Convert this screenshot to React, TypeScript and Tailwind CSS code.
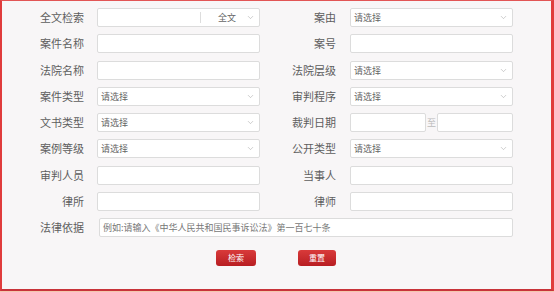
import { ChevronDown } from 'lucide-react'

const font = { fontFamily: '"Noto Sans CJK SC", "Noto Sans", sans-serif' }

function Label({ text, w }: { text: string; w: string }) {
  return <div className={`${w} shrink-0 text-right text-[11px] leading-[19px] text-[#5e5e5e]`}>{text}</div>
}

function TextBox({ className = '' }: { className?: string }) {
  return <div className={`h-[19px] rounded-[2px] border border-[#dcdcdc] bg-white ${className}`} />
}

function SelectBox({ className = '' }: { className?: string }) {
  return (
    <div className={`flex h-[19px] items-center justify-between rounded-[2px] border border-[#dcdcdc] bg-white pl-[3px] pr-[4px] ${className}`}>
      <span className="text-[9px] leading-none text-[#666]">请选择</span>
      <ChevronDown className="h-[9px] w-[9px] text-[#aaa]" strokeWidth={1.5} />
    </div>
  )
}

function Cell({ kind }: { kind: 'text' | 'select' }) {
  return kind === 'text' ? <TextBox className="w-[163px]" /> : <SelectBox className="w-[163px]" />
}

const rows: { l: string; lk: 'text' | 'select' | 'full'; r: string; rk: 'text' | 'select' | 'date' }[] = [
  { l: '全文检索', lk: 'full', r: '案由', rk: 'select' },
  { l: '案件名称', lk: 'text', r: '案号', rk: 'text' },
  { l: '法院名称', lk: 'text', r: '法院层级', rk: 'select' },
  { l: '案件类型', lk: 'select', r: '审判程序', rk: 'select' },
  { l: '文书类型', lk: 'select', r: '裁判日期', rk: 'date' },
  { l: '案例等级', lk: 'select', r: '公开类型', rk: 'select' },
  { l: '审判人员', lk: 'text', r: '当事人', rk: 'text' },
  { l: '律所', lk: 'text', r: '律师', rk: 'text' },
]

export default function App() {
  return (
    <div className="h-[292px] w-[554px] bg-[#f3c7ae]" style={font}>
      <div className="h-[291px] border-t border-b-2 border-l-2 border-r-[3px] border-t-[#e25555] border-b-[#c8333a] border-l-[#e03c3c] border-r-[#e03c3c] bg-[#f8f6f7]">
        <div className="flex flex-col gap-[7.3px] pt-[7px]">
          {rows.map((row) => (
            <div key={row.l} className="flex items-center">
              <Label text={row.l} w="w-[82px]" />
              <div className="ml-[13px]">
                {row.lk === 'full' ? (
                  <div className="flex h-[19px] w-[163px] items-center rounded-[2px] border border-[#dcdcdc] bg-white">
                    <div className="flex-1" />
                    <div className="h-[11px] w-px bg-[#ddd]" />
                    <span className="ml-[17px] text-[9px] leading-none text-[#666]">全文</span>
                    <ChevronDown className="ml-[10px] mr-[4px] h-[9px] w-[9px] text-[#aaa]" strokeWidth={1.5} />
                  </div>
                ) : (
                  <Cell kind={row.lk} />
                )}
              </div>
              <Label text={row.r} w="w-[76px]" />
              <div className="ml-[14px]">
                {row.rk === 'date' ? (
                  <div className="flex w-[163px] items-center">
                    <TextBox className="w-[76px]" />
                    <span className="w-[11px] text-center text-[9px] text-[#bbb]">至</span>
                    <TextBox className="w-[76px]" />
                  </div>
                ) : (
                  <Cell kind={row.rk} />
                )}
              </div>
            </div>
          ))}
          <div className="flex items-center">
            <Label text="法律依据" w="w-[82px]" />
            <div className="ml-[15px] flex h-[19px] w-[414px] items-center rounded-[2px] border border-[#dcdcdc] bg-white pl-[3px]">
              <span className="text-[9px] leading-none text-[#777]">例如:请输入《中华人民共和国民事诉讼法》第一百七十条</span>
            </div>
          </div>
        </div>
        <div className="mt-[13px] flex">
          <button className="ml-[214px] flex h-[16px] w-[40px] items-center justify-center rounded-[3px] bg-gradient-to-b from-[#d93a3a] to-[#b81d22] text-[8px] leading-none text-white">
            检索
          </button>
          <button className="ml-[42px] flex h-[16px] w-[38px] items-center justify-center rounded-[3px] bg-gradient-to-b from-[#d93a3a] to-[#b81d22] text-[8px] leading-none text-white">
            重置
          </button>
        </div>
      </div>
    </div>
  )
}
